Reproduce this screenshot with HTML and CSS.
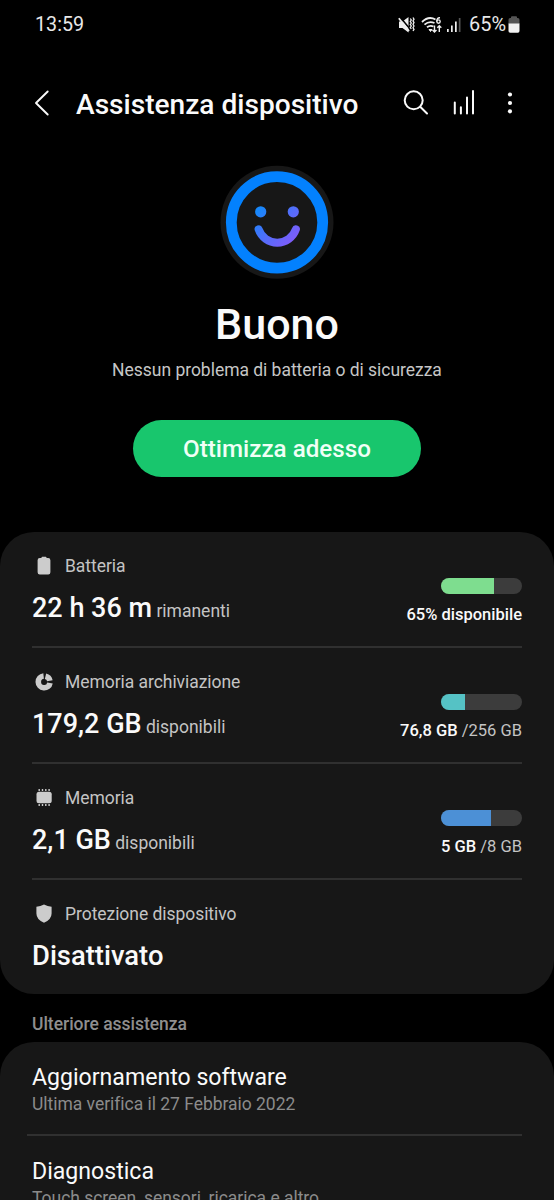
FILE: index.html
```html
<!DOCTYPE html>
<html lang="it">
<head>
<meta charset="utf-8">
<title>Assistenza dispositivo</title>
<link rel="stylesheet" href="styles.css">
</head>
<body>
<div class="screen">
  <div class="statusbar">
    <span class="clock">13:59</span>
    <div class="status-icons">
      <svg class="ic-mute" width="17" height="18" viewBox="0 0 17 18">
        <path d="M1 5.500h3.500L10.500 1v15.500L4.500 12H1z" fill="#eee"/>
        <path d="M2 1 12 13" stroke="#000" stroke-width="1.600"/>
        <path d="M.8 2.200 11 15" stroke="#eee" stroke-width="1.800"/>
        <path d="M12.300 2.500l1 1.500-1 1.500 1 1.500-1 1.500 1 1.500-1 1.500 1 1.500M15 1.500l1 1.700-1 1.700 1 1.700-1 1.700 1 1.700-1 1.700 1 1.700-1 1.600" fill="none" stroke="#eee" stroke-width="1.300"/>
      </svg>
      <svg class="ic-wifi" width="22" height="18" viewBox="0 0 22 18" fill="none" stroke="#eee" stroke-width="1.800">
        <path d="M1 6Q7.500-.5 14.500 3.500M3.500 8.700Q8 4.500 13.500 7M6 11.300Q9 8.800 12.500 10.500"/>
        <path d="M8 13.500h3l-1.500 2z" fill="#eee" stroke-width="1"/>
        <path d="M19 1.800Q15.800 1.500 15.800 5.500" stroke-width="1.400"/>
        <circle cx="17.500" cy="5.600" r="1.700" stroke-width="1.400"/>
        <path d="M13.500 9.500v6.500M11.500 14l2 2 2-2M18.300 16V9.800M16.300 11.700l2-2 2 2" stroke-width="1.400"/>
      </svg>
      <svg class="ic-signal" width="15" height="16" viewBox="0 0 15 16">
        <path d="M1 12h1.700v3H1zM5 8.500h1.700V15H5zM9 4.500h1.700V15H9z" fill="#eee"/>
        <path d="M12.800 1h1.700v14h-1.700z" fill="#555"/>
      </svg>
      <span class="percent">65%</span>
      <svg class="ic-batt" width="12" height="17" viewBox="0 0 12 17">
        <path d="M3 2V1.200Q3 .3 4 .3h4q1 0 1 .9V2h.8Q11.500 2 11.500 3.700V8H.5V3.700Q.5 2 2.200 2z" fill="#555"/>
        <path d="M.5 7.500h11V15q0 1.700-1.700 1.700H2.200Q.5 16.700.5 15z" fill="#f2f2f2"/>
      </svg>
    </div>
  </div>

  <header class="appbar">
    <svg class="back" width="16" height="26" viewBox="0 0 16 26" fill="none" stroke="#fafafa" stroke-width="1.900" stroke-linecap="round" stroke-linejoin="round"><path d="M13.700 1.500 2 13l11.700 11.500"/></svg>
    <h1>Assistenza dispositivo</h1>
    <svg class="search" width="26" height="26" viewBox="0 0 26 26" fill="none" stroke="#fafafa" stroke-width="2" stroke-linecap="round"><circle cx="10.700" cy="10.300" r="9"/><path d="M17.200 16.800l6.800 6.700"/></svg>
    <svg class="bars" width="24" height="26" viewBox="0 0 24 26" stroke="#fafafa" stroke-width="2" stroke-linecap="round"><path d="M2.800 12.500v11M8.900 17.200v6.300M15 7.500v16M21 1v22.500"/></svg>
    <svg class="more" width="6" height="22" viewBox="0 0 6 22" fill="#fafafa"><circle cx="3" cy="2.500" r="2.100"/><circle cx="3" cy="11" r="2.100"/><circle cx="3" cy="19.300" r="2.100"/></svg>
  </header>

  <section class="hero">
    <svg class="face" width="114" height="114" viewBox="0 0 114 114">
      <defs>
        <linearGradient id="g" gradientUnits="userSpaceOnUse" x1="38" y1="45" x2="76" y2="82">
          <stop offset="0" stop-color="#1688fb"/><stop offset=".5" stop-color="#566cfa"/><stop offset="1" stop-color="#8a58fa"/>
        </linearGradient>
      </defs>
      <circle cx="57" cy="57.300" r="56.500" fill="#171717"/>
      <circle cx="57" cy="57.400" r="45.700" fill="none" stroke="#0381fe" stroke-width="10.800"/>
      <circle cx="40.700" cy="46.800" r="5.600" fill="url(#g)"/>
      <circle cx="73.300" cy="46.800" r="5.600" fill="url(#g)"/>
      <path d="M38.600 64.300a19.700 19.700 0 0 0 37.300 0" fill="none" stroke="url(#g)" stroke-width="8" stroke-linecap="round"/>
    </svg>
    <h2>Buono</h2>
    <p>Nessun problema di batteria o di sicurezza</p>
    <button class="optimize">Ottimizza adesso</button>
  </section>

  <section class="card stats">
    <div class="row">
      <div class="info">
        <div class="label">
          <svg width="24" height="24" viewBox="0 0 24 24" fill="#ccc"><path d="M9.500 4V3.500q0-.8.800-.8h3.400q.8 0 .8.800V4h1.700q2.200 0 2.200 2.200v12.100q0 2.200-2.200 2.200H7.800q-2.200 0-2.200-2.200V6.200Q5.600 4 7.800 4z"/></svg>
          <span>Batteria</span>
        </div>
        <div class="value"><strong>22 h 36 m</strong> rimanenti</div>
      </div>
      <div class="usage">
        <div class="meter"><div class="fill green" style="width:65%"></div></div>
        <div class="amount"><strong>65% disponibile</strong></div>
      </div>
    </div>
    <div class="row">
      <div class="info">
        <div class="label">
          <svg width="24" height="24" viewBox="0 0 24 24" fill="none" stroke="#ccc" stroke-width="5.600"><path d="M11.600 6A5.900 5.900 0 1 0 18 12.900M13.500 6.200A5.900 5.900 0 0 1 17.900 10.800"/></svg>
          <span>Memoria archiviazione</span>
        </div>
        <div class="value"><strong>179,2 GB</strong> disponibili</div>
      </div>
      <div class="usage">
        <div class="meter"><div class="fill teal" style="width:30%"></div></div>
        <div class="amount"><strong>76,8 GB</strong> /256 GB</div>
      </div>
    </div>
    <div class="row">
      <div class="info">
        <div class="label">
          <svg width="24" height="24" viewBox="0 0 24 24" fill="#ccc"><rect x="4.500" y="5.800" width="15.200" height="11.400" rx="2.500"/><path d="M6.500 3h1.400v2H6.500zM9.800 3h1.400v2H9.800zM13.100 3h1.400v2h-1.400zM16.400 3h1.400v2h-1.400zM6.500 18.100h1.400v2H6.500zM9.800 18.100h1.400v2H9.800zM13.100 18.100h1.400v2h-1.400zM16.400 18.100h1.400v2h-1.400z"/></svg>
          <span>Memoria</span>
        </div>
        <div class="value"><strong>2,1 GB</strong> disponibili</div>
      </div>
      <div class="usage">
        <div class="meter"><div class="fill blue" style="width:62%"></div></div>
        <div class="amount"><strong>5 GB</strong> /8 GB</div>
      </div>
    </div>
    <div class="row">
      <div class="info">
        <div class="label">
          <svg width="24" height="24" viewBox="0 0 24 24" fill="#ccc"><path d="M12 2.500q3.500 1.800 7.600 2.200v6.800q0 6-7.600 9.300-7.600-3.300-7.600-9.300V4.700Q8.500 4.300 12 2.500z"/></svg>
          <span>Protezione dispositivo</span>
        </div>
        <div class="value state"><strong>Disattivato</strong></div>
      </div>
    </div>
  </section>

  <h3 class="section-title">Ulteriore assistenza</h3>

  <section class="card links">
    <div class="link">
      <div class="link-title">Aggiornamento software</div>
      <div class="link-sub">Ultima verifica il 27 Febbraio 2022</div>
    </div>
    <div class="link">
      <div class="link-title">Diagnostica</div>
      <div class="link-sub">Touch screen, sensori, ricarica e altro</div>
    </div>
  </section>
</div>
</body>
</html>
```
FILE: styles.css
```css
* { box-sizing: border-box; margin: 0; }
body { background: #000; color: #fafafa; font-family: Roboto, "Noto Sans", sans-serif; }
svg { display: block; flex: none; }
.screen { width: 554px; height: 1200px; overflow: hidden; background: #000; }

.statusbar { display: flex; justify-content: space-between; align-items: center; height: 50px; padding: 0 34px 0 35px; }
.clock { font-size: 19.7px; line-height: 24px; color: #e8e8e8; }
.status-icons { display: flex; align-items: center; }
.ic-wifi { margin-left: 6px; }
.ic-signal { margin-left: 3px; }
.percent { margin-left: 8px; font-size: 19.9px; line-height: 24px; color: #e8e8e8; }
.ic-batt { margin: 0 0 1px 2px; }

.appbar { display: flex; align-items: center; height: 106px; padding: 0 41px 0 34px; }
.appbar h1 { margin-left: 26px; padding-top: 3px; flex: 1; font-size: 28.1px; line-height: 34px; font-weight: 500; white-space: nowrap; }
.bars { margin-left: 23px; }
.more { margin-left: 31px; }

.hero { display: flex; flex-direction: column; align-items: center; height: 376px; padding-top: 9px; }
.hero h2 { margin-top: 20px; font-size: 43px; line-height: 50px; font-weight: 500; }
.hero p { margin-top: 9px; font-size: 17.5px; line-height: 24px; letter-spacing: -.03px; color: #c6c6c6; }
.optimize { margin-top: 38px; width: 288px; height: 57px; padding: 1px 0 0; border: 0; border-radius: 29px; background: #18c66d; color: #f0fff6; font: 500 24.2px/30px Roboto, sans-serif; }

.card { background: #171717; border-radius: 34px; }
.stats { height: 462px; padding: 0 32px; }
.row { display: flex; justify-content: space-between; height: 116px; padding-top: 22px; border-bottom: 2px solid #303030; }
.row:last-child { border: 0; }
.label { display: flex; align-items: center; gap: 9px; font-size: 17.5px; line-height: 24px; letter-spacing: -.05px; color: #c4c4c4; }
.value { margin-top: 12px; font-size: 17.5px; line-height: 36px; color: #c4c4c4; white-space: nowrap; }
.value strong { font-size: 27px; font-weight: 500; color: #fafafa; }
.value.state strong { font-size: 27.4px; }
.usage { display: flex; flex-direction: column; align-items: flex-end; padding-top: 24px; }
.meter { width: 81px; height: 16px; border-radius: 8px; overflow: hidden; background: #3c3c3c; }
.fill { height: 100%; }
.green { background: #7edd8f; }
.teal { background: #55c2c5; }
.blue { background: #4c90d6; }
.amount { margin-top: 9px; font-size: 16.5px; line-height: 24px; color: #c4c4c4; }
.amount strong { font-weight: 500; color: #fafafa; }

.section-title { padding: 19px 32px 7px; font-size: 17.5px; line-height: 22px; font-weight: 500; letter-spacing: -.03px; color: #8e8e8e; }

.links { height: 240px; padding: 0 32px 0 27px; }
.link { height: 94px; padding: 21px 0 0 5px; border-bottom: 2px solid #303030; }
.link-title { font-size: 23.1px; line-height: 30px; }
.link-sub { margin-top: -1px; font-size: 17.5px; line-height: 25px; letter-spacing: -.03px; color: #8b8b8b; }
```
